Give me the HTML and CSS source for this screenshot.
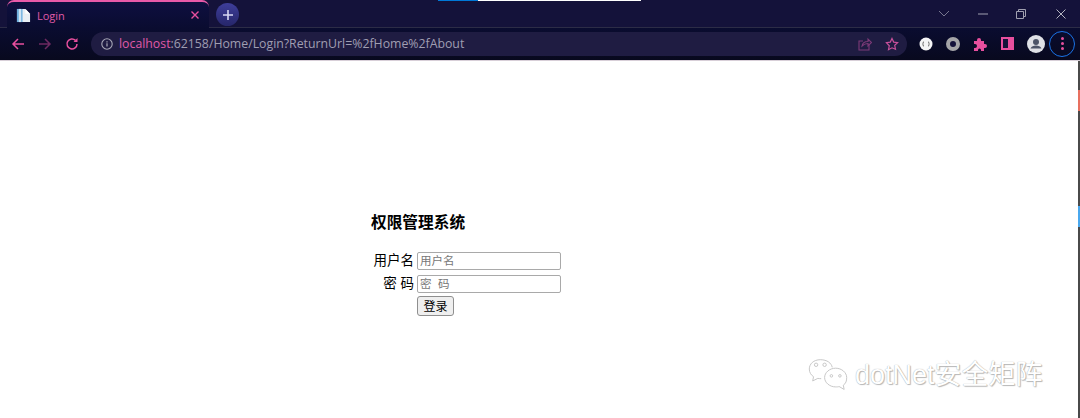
FILE: index.html
```html
<!DOCTYPE html>
<html lang="zh">
<head>
<meta charset="utf-8">
<title>Login</title>
<link rel="stylesheet" href="styles.css">
</head>
<body>
<div class="strip">
  <div class="capture"><span class="cap-blue"></span><span class="cap-white"></span></div>
  <div class="tab">
    <svg class="fav" width="15" height="15" viewBox="0 0 16 16"><path d="M1 1h9l5 5v9H1z" fill="#e8eef4"/><path d="M1 1h6v14H1z" fill="#6fb0e0"/><path d="M3 1h2.500v14H3z" fill="#cfe4f4"/><path d="M10 1l5 5h-5z" fill="#fff"/></svg>
    <span class="tab-title">Login</span>
    <svg class="tab-x" width="10" height="10" viewBox="0 0 10 10"><path d="M1.500 1.500l7 7M8.500 1.500l-7 7" stroke="#e84f9e" stroke-width="1.400"/></svg>
  </div>
  <div class="newtab"><svg width="12" height="12" viewBox="0 0 12 12"><path d="M6 1v10M1 6h10" stroke="#d8d8f4" stroke-width="1.600"/></svg></div>
  <div class="winbtns">
    <svg width="12" height="8" viewBox="0 0 12 8"><path d="M1 1l5 5 5-5" fill="none" stroke="#77778f" stroke-width="1"/></svg>
    <svg width="10" height="2" viewBox="0 0 10 2"><path d="M0 1h10" stroke="#a0a0b0" stroke-width="1"/></svg>
    <svg class="restore" width="10" height="10" viewBox="0 0 10 10"><path d="M.5 2.500h7v7h-7zM2.500 2.500v-2h7v7h-2" fill="none" stroke="#a0a0b0" stroke-width="1"/></svg>
    <svg width="10" height="10" viewBox="0 0 10 10"><path d="M.5.5l9 9M9.500.5l-9 9" stroke="#b4b4c0" stroke-width="1"/></svg>
  </div>
</div>
<div class="toolbar">
  <svg class="nav" width="16" height="16" viewBox="0 0 16 16"><path d="M14 8H3M8 3L3 8l5 5" fill="none" stroke="#e84f9e" stroke-width="1.500"/></svg>
  <svg class="nav" width="16" height="16" viewBox="0 0 16 16"><path d="M2 8h11M8 3l5 5-5 5" fill="none" stroke="#6d2a62" stroke-width="1.500"/></svg>
  <svg class="nav" width="16" height="16" viewBox="0 0 16 16"><path d="M13 8a5 5 0 1 1-1.500-3.600" fill="none" stroke="#e84f9e" stroke-width="1.500"/><path d="M13.500 2v4h-4z" fill="#e84f9e"/></svg>
  <div class="omnibox">
    <svg class="info" width="12" height="12" viewBox="0 0 12 12"><circle cx="6" cy="6" r="5.200" fill="none" stroke="#a9a9b8" stroke-width="1.100"/><path d="M6 5.200v3.400M6 3.200v1.200" stroke="#a9a9b8" stroke-width="1.200"/></svg>
    <span class="url"><span class="host">localhost</span>:62158/Home/Login?ReturnUrl=%2fHome%2fAbout</span>
    <svg class="share" width="14" height="14" viewBox="0 0 14 14"><path d="M11 8v5H1V4h4" fill="none" stroke="#7d3a78" stroke-width="1.100"/><path d="M4 9c.5-3 3-4.500 6-4.500V2l3.500 3.500L10 9V6.500C7.500 6.500 5.500 7.500 4 9z" fill="none" stroke="#7d3a78" stroke-width="1.100"/></svg>
    <svg class="star" width="14" height="14" viewBox="0 0 14 14"><path d="M7 1.500l1.700 3.600 3.900.5-2.900 2.700.8 3.900L7 10.800l-3.500 1.900.8-3.900L1.400 5.600l3.900-.5z" fill="none" stroke="#c9519c" stroke-width="1.200"/></svg>
  </div>
  <div class="exts">
    <div class="ext-dev"><svg width="14" height="14" viewBox="0 0 14 14"><circle cx="7" cy="7" r="6.500" fill="#f4f4f6"/><path d="M5 4.500C3.800 5 4.500 6.500 3.500 7c1 .5.300 2 1.500 2.500M9 4.500c1.200.5.500 2 1.500 2.500-1 .5-.3 2-1.500 2.500" fill="none" stroke="#444" stroke-width=".8"/></svg></div>
    <div class="ext-ring"></div>
    <svg width="14" height="14" viewBox="0 0 14 14"><path d="M1 4h3V3a2 2 0 0 1 4 0v1h3v3h1a2 2 0 0 1 0 4h-1v3H8v-1a1.500 1.500 0 0 0-3 0v1H1v-3h1a2 2 0 0 0 0-4H1z" fill="#e84f9e"/></svg>
    <div class="ext-side"></div>
    <div class="avatar"><svg width="18" height="18" viewBox="0 0 18 18"><circle cx="9" cy="9" r="9" fill="#dfe1e6"/><circle cx="9" cy="7" r="3" fill="#4c5468"/><path d="M3.500 13.500c1-2.200 3-3 5.500-3s4.500.8 5.500 3z" fill="#4c5468"/></svg></div>
    <div class="menu"><i class="dot"></i><i class="dot"></i><i class="dot"></i></div>
  </div>
</div>
<main class="page">
  <div class="form">
    <h3 class="title">权限管理系统</h3>
    <div class="fields">
      <label class="lbl">用户名</label><input class="inp" type="text" placeholder="用户名">
      <label class="lbl">密&nbsp;码</label><input class="inp" type="text" placeholder="密&nbsp;&nbsp;码">
      <span></span><button class="btn" type="button">登录</button>
    </div>
  </div>
  <div class="edge"><span class="mark-red"></span><span class="mark-blue"></span></div>
  <div class="watermark">
    <svg class="wechat" width="42" height="34" viewBox="0 0 48 40"><g fill="none" stroke="#c4c4c4" stroke-width="1.100"><path d="M15 2C7 2 2 7 2 13c0 4 2 7 5 9l-1 5 6-3c1 0 3 .5 4 .3"/><path d="M15 2c8 0 13 4 14 9"/><path d="M33 12c-7 0-13 5-13 11s6 11 13 11c2 0 3 0 4-.5l6 3.500-1-5c3-2 4-5 4-9 0-6-6-11-13-11z"/><circle cx="10" cy="8" r="2"/><circle cx="20" cy="8" r="2"/><circle cx="28" cy="21" r="1.500"/><circle cx="38" cy="21" r="1.500"/></g></svg>
    <span class="wm-text">dotNet安全矩阵</span>
  </div>
</main>
```
FILE: styles.css
```css
* { box-sizing: border-box; }
html, body { margin: 0; height: 418px; overflow: hidden; background: #fff; }
body { font-family: "Liberation Sans", "Noto Sans CJK SC", sans-serif; display: flex; flex-direction: column; }

.strip { height: 28px; background: #14123a; border-bottom: 1px solid #2c2c46; display: flex; align-items: flex-end; padding-left: 7px; position: relative; flex: none; }
.capture { position: absolute; top: 0; left: 438px; display: flex; height: 1px; }
.cap-blue { width: 40px; background: #0078d7; }
.cap-white { width: 163px; background: #fff; }
.tab { width: 202px; height: 28px; margin-bottom: -1px; background: linear-gradient(#0e0f40, #0a0c30); border-top: 2px solid #e85aa8; border-radius: 7px 7px 0 0; display: flex; align-items: center; padding: 0 9px; position: relative; z-index: 1; }
.fav { margin-right: 6px; flex: none; }
.tab-title { font: 11px "Open Sans", sans-serif; color: #e05aa8; flex: 1; }
.newtab { width: 23px; height: 23px; border-radius: 50%; background: linear-gradient(#3e3e9a, #26266a); margin: 0 0 1px 7px; display: flex; align-items: center; justify-content: center; }
.winbtns { margin-left: auto; align-self: center; display: flex; align-items: center; gap: 28px; padding-right: 14px; justify-content: flex-end; }
.restore { margin-right: 2px; }

.toolbar { height: 33px; flex: none; background: linear-gradient(#0a0c30, #08091e); display: flex; align-items: center; padding: 0 0 1px 10px; border-bottom: 1px solid #d8cfd8; }
.nav { margin-right: 11px; flex: none; }
.omnibox { width: 816px; height: 24px; border-radius: 12px; background: #1f1c42; display: flex; align-items: center; padding: 0 8px 0 10px; }
.info { flex: none; margin-right: 6px; }
.url { font: 12.300px "Open Sans", sans-serif; color: #a09eb2; flex: 1; white-space: nowrap; }
.host { color: #e05aa8; }
.share { margin-right: 13px; }
.star { margin-right: 0; }
.exts { display: flex; align-items: center; margin-left: 12px; gap: 13px; }
.ext-dev { width: 14px; height: 14px; display: flex; }
.ext-ring { width: 14px; height: 14px; border-radius: 50%; border: 4px solid #a5a5a8; background: #14123a; }
.ext-side { width: 13px; height: 13px; background: linear-gradient(to right, #14123a 0 55%, #e84f9e 55%); border: 2px solid #e84f9e; margin-left: 1px; }
.avatar { width: 18px; height: 18px; display: flex; }
.menu { width: 26px; height: 26px; border-radius: 50%; border: 1.500px solid #1a73e8; display: flex; flex-direction: column; align-items: center; justify-content: center; gap: 2px; margin-left: -9px; }
.dot { width: 3px; height: 3px; border-radius: 50%; background: #e84f9e; }

.page { flex: 1; position: relative; padding: 152px 0 0 371px; }
.title { margin: 0; font-size: 15.700px; line-height: 20px; font-weight: 700; color: #000; }
.fields { display: grid; grid-template-columns: 43px 144px; column-gap: 3px; row-gap: 5px; margin-top: 19px; grid-auto-rows: 18px; align-items: center; }
.lbl { font-size: 13.500px; line-height: 16px; text-align: right; color: #000; white-space: nowrap; }
.inp { width: 144px; height: 18px; border: 1px solid #a9a9a9; border-radius: 2px; padding: 0 2px; font: 11.500px "Liberation Sans", "Noto Sans CJK SC", sans-serif; background: #fff; outline: none; }
.inp::placeholder { color: #777; opacity: 1; }
.btn { width: 37px; height: 20px; margin-top: -3px; padding: 0; border: 1px solid #8f8f8f; border-radius: 3px; background: #efefef; font: 12px "Liberation Sans", "Noto Sans CJK SC", sans-serif; color: #000; }

.edge { position: absolute; top: 0; right: 0; bottom: 0; width: 2px; background: #4a4a4a; }
.mark-red { position: absolute; top: 29px; left: 0; width: 2px; height: 21px; background: #e8705f; }
.mark-blue { position: absolute; top: 145px; left: 0; width: 2px; height: 21px; background: #4aa8ee; }

.watermark { position: absolute; left: 807px; top: 292px; display: flex; align-items: center; gap: 6px; }
.wechat { margin-top: 4px; }
.wm-text { font: 27px "Liberation Sans", "Noto Sans CJK SC", sans-serif; color: #fff; text-shadow: 0 0 1px #999, 1px 1px 1px #bbb; white-space: nowrap; }
```
